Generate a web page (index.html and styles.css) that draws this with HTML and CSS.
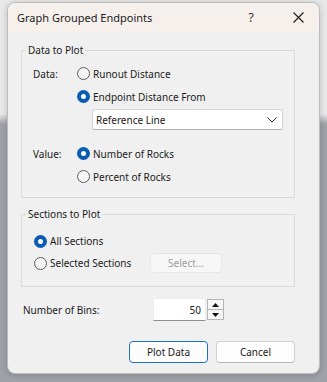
FILE: index.html
```html
<!DOCTYPE html>
<html>
<head>
<meta charset="utf-8">
<link rel="stylesheet" href="styles.css">
</head>
<body>
<div class="desk">
  <div class="win">
    <div class="titlebar">
      <span class="title">Graph Grouped Endpoints</span>
      <span class="help">?</span>
      <span class="close"><svg width="11" height="11" viewBox="0 0 11 11"><path d="M0.5 0.5 L10.5 10.5 M10.5 0.5 L0.5 10.5" stroke="#1a1a1a" stroke-width="1.1" fill="none"/></svg></span>
    </div>
    <div class="content">
      <fieldset class="group">
        <legend>Data to Plot</legend>
        <div class="gbody g1">
          <div class="row"><span class="lbl">Data:</span><span class="radio"><span class="rb"></span>Runout Distance</span></div>
          <div class="row indent"><span class="radio"><span class="rb on"></span>Endpoint Distance From</span></div>
          <div class="select"><span>Reference Line</span><svg width="10" height="6" viewBox="0 0 10 6"><path d="M0.5 0.5 L5 5 L9.5 0.5" stroke="#333" stroke-width="1" fill="none"/></svg></div>
          <div class="row value"><span class="lbl">Value:</span><span class="radio"><span class="rb on"></span>Number of Rocks</span></div>
          <div class="row indent"><span class="radio"><span class="rb"></span>Percent of Rocks</span></div>
        </div>
      </fieldset>
      <fieldset class="group g2wrap">
        <legend>Sections to Plot</legend>
        <div class="gbody g2">
          <div class="row2"><span class="radio"><span class="rb on"></span>All Sections</span></div>
          <div class="row2"><span class="radio wide"><span class="rb"></span>Selected Sections</span><span class="btn disabled">Select...</span></div>
        </div>
      </fieldset>
      <div class="bins">
        <span class="binlbl">Number of Bins:</span>
        <span class="edit">50</span>
        <span class="spin">
          <span class="sp up"><svg width="7" height="4" viewBox="0 0 7 4"><path d="M0 4 L3.5 0 L7 4 Z" fill="#111"/></svg></span>
          <span class="sp dn"><svg width="7" height="4" viewBox="0 0 7 4"><path d="M0 0 L3.5 4 L7 0 Z" fill="#111"/></svg></span>
        </span>
      </div>
      <div class="actions">
        <span class="btn default">Plot Data</span>
        <span class="btn">Cancel</span>
      </div>
    </div>
  </div>
</div>
</body>
</html>
```
FILE: styles.css
```css
* { box-sizing: border-box; }
html, body { margin: 0; height: 100%; }
body {
  background: linear-gradient(#e8e8e9 0, #e8e8e9 114px, #a0a1a7 124px, #a0a1a7 100%);
  font-family: "Noto Sans", "Open Sans", sans-serif;
  font-size: 10px;
  color: #1a1a1a;
  overflow: hidden;
}
.desk { padding: 2px 0 0 7px; }
.win {
  width: 313px;
  height: 372px;
  background: #f0f0f0;
  border: 1px solid #bcbcbc;
  border-radius: 8px;
  overflow: hidden;
  box-shadow: 0 1px 6px rgba(0,0,0,0.18);
}
.titlebar {
  height: 29px;
  background: #f6f0ec;
  display: flex;
  align-items: center;
  padding-left: 9px;
  font-size: 11px;
}
.title { flex: 1; }
.help { width: 42px; margin-right: 5px; text-align: center; font-size: 12px; color: #333; }
.close { width: 42px; display: flex; justify-content: center; align-items: center; }
.content { padding: 11px 24px 0 13px; }
.group {
  margin: 0;
  padding: 0;
  border: 1px solid #dadada;
  min-width: 0;
}
.group legend {
  margin-left: 4px;
  padding: 0 2px;
  line-height: 14px;
}
.g1 { padding: 5px 0 9px 11px; }
.row { display: flex; align-items: center; height: 23px; }
.row.indent { padding-left: 44px; }
.row.value { margin-top: 12px; }
.lbl { width: 44px; }
.radio { display: flex; align-items: center; gap: 3px; }
.rb {
  width: 13px; height: 13px; border-radius: 50%;
  border: 1px solid #5c5c5c; background: #f5f5f5; flex: none;
}
.rb.on {
  border: none; background: #0a5cb3;
  display: flex; align-items: center; justify-content: center;
}
.rb.on::after {
  content: ""; width: 5px; height: 5px; border-radius: 50%; background: #fff;
}
.select {
  margin: 1px 0 0 59px;
  width: 191px; height: 21px;
  background: #fff;
  border: 1px solid #d6d6d6;
  border-bottom-color: #b0b0b0;
  border-radius: 3px;
  display: flex; align-items: center; justify-content: space-between;
  padding: 0 5px 0 3px;
}
.g2wrap { margin-top: 9px; }
.g2 { padding: 9px 0 12px 12px; }
.row2 { display: flex; align-items: center; height: 22px; }
.radio.wide { width: 116px; }
.btn {
  display: flex; align-items: center; justify-content: center;
  background: #fdfdfd;
  border: 1px solid #d0d0d0;
  border-bottom-color: #b8b8b8;
  border-radius: 4px;
  width: 79px; height: 22px;
}
.btn.disabled {
  width: 72px; height: 20px;
  background: #f7f7f7; border-color: #e6e6e6; color: #9d9d9d;
}
.btn.default { border-color: #1f6fc2; }
.bins { display: flex; align-items: center; margin-top: 11px; height: 23px; padding-left: 2px; }
.binlbl { width: 130px; }
.edit {
  width: 53px; height: 23px; background: #fff;
  border: 1px solid #ececec; border-bottom-color: #8e8e8e;
  display: flex; align-items: center; justify-content: flex-end; padding-right: 4px;
}
.spin { display: flex; flex-direction: column; margin-left: 1px; width: 17px; height: 21px; }
.sp {
  flex: 1; display: flex; align-items: center; justify-content: center;
  background: #f6f6f6; border: 1px solid #b4b4b4;
}
.sp.dn { border-top: none; }
.actions { display: flex; justify-content: flex-end; gap: 8px; margin-top: 20px; }
```
